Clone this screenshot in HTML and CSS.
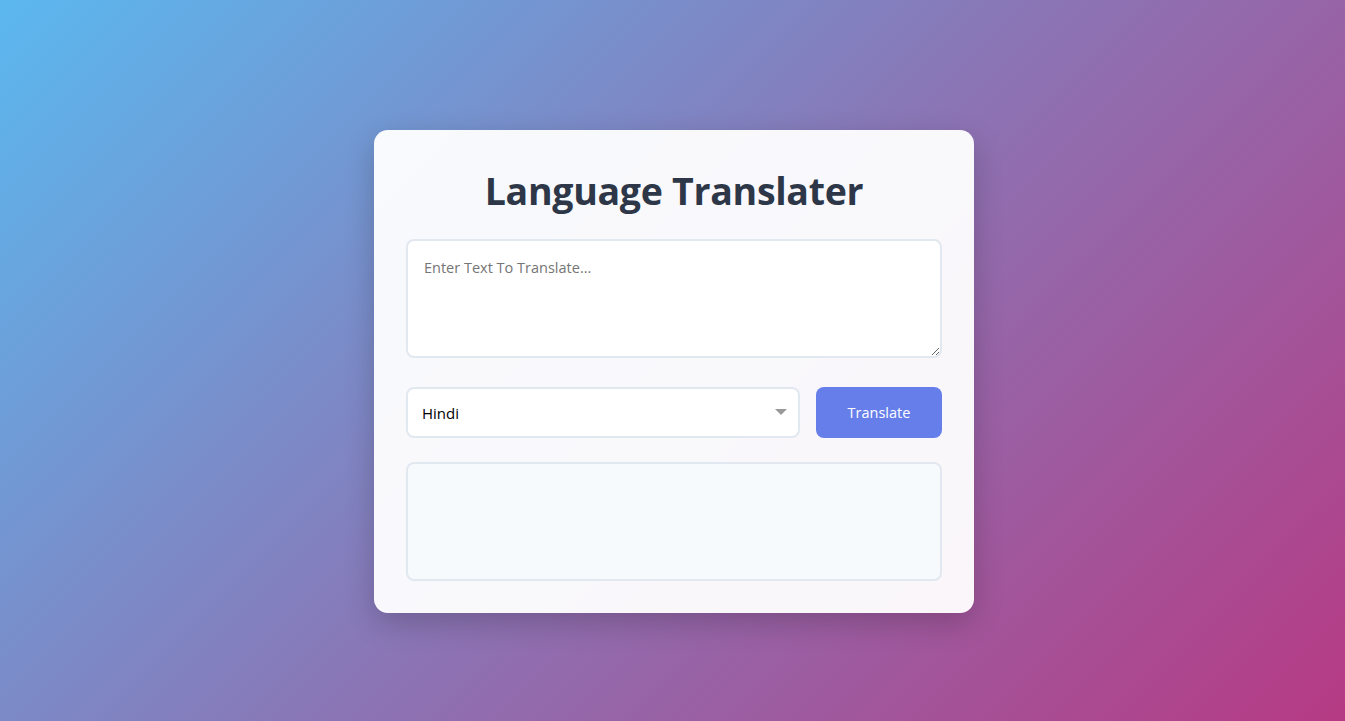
FILE: index.html
```html
<!DOCTYPE html>
<html lang="en">
<head>
<meta charset="UTF-8">
<title>Language Translater</title>
<link rel="stylesheet" href="styles.css">
</head>
<body>
<main class="card">
  <h1 class="title">Language Translater</h1>
  <textarea class="input" placeholder="Enter Text To Translate..."></textarea>
  <div class="row">
    <div class="select-wrap">
      <select class="select">
        <option>Hindi</option>
        <option>English</option>
        <option>Spanish</option>
        <option>French</option>
      </select>
      <span class="arrow"></span>
    </div>
    <button class="btn">Translate</button>
  </div>
  <div class="output"></div>
</main>
</body>
</html>
```
FILE: styles.css
```css
* { box-sizing: border-box; }
html, body { height: 100%; }
body {
  margin: 0;
  padding: 22px 0 0 3px;
  font-family: "Open Sans", "Noto Sans", sans-serif;
  background: linear-gradient(135deg, #5bb8ef 0%, #8a76b6 50%, #b63a84 100%);
  display: flex;
  align-items: center;
  justify-content: center;
}
.card {
  width: 600px;
  padding: 32px;
  background: rgba(255, 255, 255, 0.95);
  border-radius: 14px;
  box-shadow: 0 10px 30px rgba(0, 0, 0, 0.2);
  display: flex;
  flex-direction: column;
}
.title {
  margin: 0 0 24px;
  padding-top: 5px;
  text-align: center;
  font-size: 37.5px;
  line-height: 48px;
  font-weight: 700;
  color: #2d3748;
  letter-spacing: -0.3px;
}
.input {
  display: block;
  width: 100%;
  height: 119px;
  padding: 17px 16px;
  border: 2px solid #e2e8f0;
  border-radius: 8px;
  font-family: inherit;
  font-size: 14.5px;
  color: #2d3748;
  background: #fff;
  outline: none;
}
.input::placeholder { color: #757575; }
.row {
  display: flex;
  gap: 16px;
  margin-top: 29px;
}
.select-wrap {
  position: relative;
  flex: 1;
}
.select {
  width: 100%;
  height: 51px;
  padding: 0 14px;
  border: 2px solid #e2e8f0;
  border-radius: 8px;
  background: #fff;
  font-family: inherit;
  font-size: 15px;
  color: #000;
  appearance: none;
  -webkit-appearance: none;
  outline: none;
}
.arrow {
  position: absolute;
  right: 13px;
  top: 22px;
  width: 0;
  height: 0;
  border-left: 6px solid transparent;
  border-right: 6px solid transparent;
  border-top: 6px solid #999;
  pointer-events: none;
}
.btn {
  width: 126px;
  height: 51px;
  border: none;
  border-radius: 8px;
  background: #667eea;
  color: #fff;
  font-family: inherit;
  font-size: 14.5px;
}
.output {
  margin-top: 24px;
  height: 119px;
  border: 2px solid #e2e8f0;
  border-radius: 8px;
  background: #f7fafc;
}
```
